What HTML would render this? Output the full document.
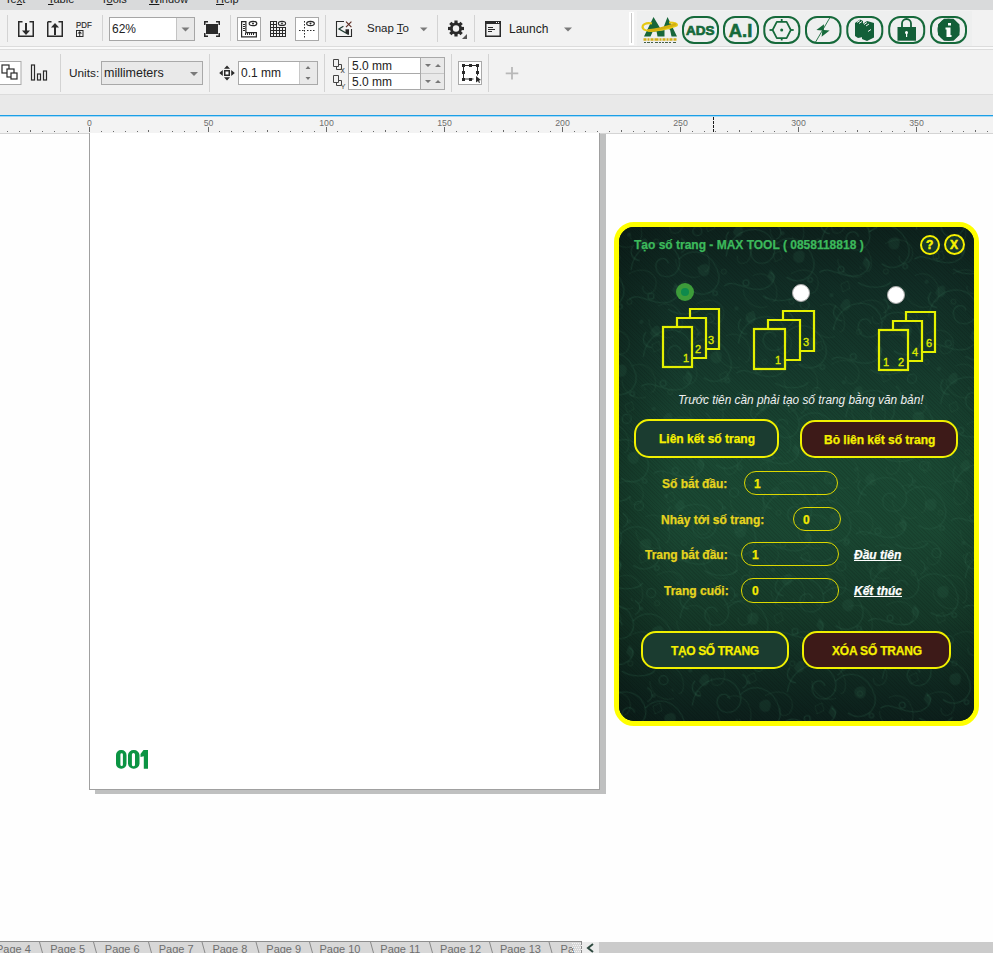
<!DOCTYPE html>
<html><head><meta charset="utf-8">
<style>
*{margin:0;padding:0;box-sizing:border-box}
html,body{width:993px;height:953px;overflow:hidden;background:#fefefe;font-family:"Liberation Sans",sans-serif;position:relative}
.a{position:absolute}
.menu{left:0;top:0;width:993px;height:10px;background:#d9dadb;overflow:hidden}
.menu span{position:absolute;top:-7px;font-size:11px;color:#1a1a1a}
.tb1{left:0;top:10px;width:993px;height:36px;background:#f2f2f2}
.ln{background:#dcdcdc}
.sep{position:absolute;width:1px;background:#d6d6d6}
.tb2{left:0;top:50px;width:993px;height:44px;background:#f2f2f2}
.band{left:0;top:95px;width:993px;height:20px;background:#e9e9e9}
.blue{left:0;top:115px;width:993px;height:1px;background:#1c9fe6;box-shadow:0 0.6px 0 #6cc0ee}
.ruler{left:0;top:117px;width:993px;height:16px;background:#f3f3f3}
.txt{font-size:12px;color:#222;white-space:nowrap}
.box{position:absolute;border:1px solid #a9a9a9;background:#fff}
</style></head><body>
<!-- menu -->
<div class="a menu">
  <span style="left:5px">Te<u>x</u>t</span>
  <span style="left:48px"><u>T</u>able</span>
  <span style="left:101px">T<u>o</u>ols</span>
  <span style="left:149px"><u>W</u>indow</span>
  <span style="left:216px"><u>H</u>elp</span>
</div>
<div class="a tb1"></div>
<div class="a ln" style="left:0;top:46px;width:993px;height:1px"></div>
<div class="a" style="left:0;top:47px;width:993px;height:2px;background:#fafafa"></div>
<div class="a ln" style="left:0;top:49px;width:993px;height:1px"></div>
<div class="a tb2"></div>
<div class="a ln" style="left:0;top:94px;width:993px;height:1px"></div>
<div class="a band"></div>
<div class="a blue"></div>
<div class="a ruler"></div>
<div class="a" style="left:0;top:133px;width:993px;height:1px;background:#d4d4d4"></div>


<!-- toolbar content -->
<svg class="a" style="left:0;top:0" width="993" height="134" viewBox="0 0 993 134">
<g fill="#d3d3d3">
<rect x="7" y="15" width="1" height="27"/><rect x="102" y="15" width="1" height="26"/><rect x="230" y="15" width="1" height="26"/>
<rect x="325" y="15" width="1" height="27"/><rect x="437" y="15" width="1" height="27"/><rect x="474" y="15" width="1" height="27"/>
<rect x="60" y="54" width="1" height="38"/><rect x="209" y="54" width="1" height="38"/><rect x="324" y="54" width="1" height="38"/>
<rect x="451" y="54" width="1" height="38"/><rect x="488" y="54" width="1" height="38"/>
</g>
<rect x="629" y="12" width="5" height="33" fill="#fff"/><rect x="631" y="13" width="1" height="30" fill="#c8c8c8"/>
<rect x="637" y="11" width="335" height="35" fill="#eeefef"/>
<g fill="none" stroke="#2a2a2a" stroke-width="1.5">
<!-- import -->
<path d="M22.5 21.75H18.75V36.25H33.25V21.75H29.5"/>
<path d="M47.75 21.75H51.5M58.5 21.75H62.25V36.25H47.75V21.75"/>
<!-- fullscreen brackets -->
<path d="M204.75 25V21.75H208M216 21.75H219.25V25M219.25 33V36.25H216M208 36.25H204.75V33"/>
</g>
<g fill="#2a2a2a">
<rect x="25" y="23" width="2" height="9"/><path d="M22 30.5h8l-4 4.5z"/>
<rect x="54" y="26" width="2" height="9"/><path d="M51 27.5h8l-4-4.5z"/>
<rect x="206" y="24" width="12" height="10"/>
</g>
<text x="76" y="28" font-family="Liberation Sans" font-size="8.4" fill="#2a2a2a" stroke="#2a2a2a" stroke-width="0.2" textLength="15.7" lengthAdjust="spacingAndGlyphs">PDF</text>
<rect x="76.5" y="30.5" width="6.5" height="6" fill="none" stroke="#2a2a2a" stroke-width="1"/>
<path d="M77.5 33.5l2.25-2.5 2.25 2.5z" fill="#2a2a2a"/><rect x="79.2" y="33" width="1" height="3.5" fill="#2a2a2a"/>
<!-- combo -->
<rect x="109.5" y="17.5" width="85" height="23" fill="#fff" stroke="#a6a6a6"/>
<rect x="176" y="18" width="18" height="22" fill="#e9e9e9"/><rect x="176" y="18" width="1" height="22" fill="#c4c4c4"/>
<path d="M181.5 27.5h8l-4 4z" fill="#7a7a7a"/>
<!-- ruler box -->
<rect x="237.5" y="17.5" width="23" height="23" fill="#fff" stroke="#a9a9a9"/>
<path d="M241.6 21.6h4.3v11h10.5v4.3h-14.8z" fill="none" stroke="#2a2a2a" stroke-width="1.2"/>
<g fill="#2a2a2a"><rect x="243" y="24" width="2" height="1"/><rect x="243" y="26" width="2" height="1"/><rect x="243" y="28" width="2" height="1"/><rect x="243" y="30" width="2" height="1"/>
<rect x="245" y="33" width="1" height="2"/><rect x="247" y="33" width="1" height="2"/><rect x="249" y="33" width="1" height="2"/><rect x="251" y="33" width="1" height="2"/><rect x="253" y="33" width="1" height="2"/></g>
<ellipse cx="253" cy="23.5" rx="3.8" ry="2.2" fill="none" stroke="#2a2a2a" stroke-width="1.2"/><circle cx="253" cy="23.5" r="1" fill="#2a2a2a"/>
<!-- grid -->
<g fill="#2a2a2a">
<rect x="270" y="21" width="1" height="16"/>
<rect x="273" y="21" width="1" height="16"/>
<rect x="276" y="21" width="1" height="16"/>
<rect x="279" y="27" width="1" height="10"/>
<rect x="282" y="27" width="1" height="10"/>
<rect x="285" y="27" width="1" height="10"/>
<rect x="270" y="21" width="7" height="1"/>
<rect x="270" y="24" width="7" height="1"/>
<rect x="270" y="27" width="16" height="1"/>
<rect x="270" y="30" width="16" height="1"/>
<rect x="270" y="33" width="16" height="1"/>
<rect x="270" y="36" width="16" height="1"/>
</g>
<ellipse cx="282" cy="23.4" rx="3.6" ry="2" fill="none" stroke="#2a2a2a" stroke-width="1.1"/><circle cx="282" cy="23.4" r="0.9" fill="#2a2a2a"/>
<!-- guidelines box -->
<rect x="295.5" y="17.5" width="23" height="23" fill="#fff" stroke="#a9a9a9"/>
<g fill="#2a2a2a"><rect x="304" y="21" width="1" height="1.5"/><rect x="304" y="24" width="1" height="1.5"/><rect x="304" y="27" width="1" height="1.5"/><rect x="304" y="30" width="1" height="1.5"/><rect x="304" y="33" width="1" height="1.5"/><rect x="304" y="36" width="1" height="1.5"/>
<rect x="299" y="30" width="1.5" height="1"/><rect x="302" y="30" width="1.5" height="1"/><rect x="307" y="30" width="1.5" height="1"/><rect x="310" y="30" width="1.5" height="1"/><rect x="313" y="30" width="1.5" height="1"/></g>
<ellipse cx="310.5" cy="23.5" rx="3.8" ry="2.2" fill="none" stroke="#2a2a2a" stroke-width="1.2"/><circle cx="310.5" cy="23.5" r="1" fill="#2a2a2a"/>
<!-- snap icon -->
<path d="M344 21.5H336.5V36.5H351.5V29" fill="none" stroke="#2a2a2a" stroke-width="1.1"/>
<path d="M346 21.6l5.4 5.6M351.4 21.6l-5.4 5.6" stroke="#5a2a20" stroke-width="1.1"/>
<path d="M343.4 26.3L339 29l9.6 5.5" fill="none" stroke="#1f3a30" stroke-width="1.3"/>
<path d="M345.5 29.2h3.5v5.5l-3.5-2z" fill="#2a2a2a"/>
<path d="M420 27.5h7.5l-3.75 3.75z" fill="#7a7a7a"/>
<!-- gear -->
<g transform="translate(456,28.5)">
<circle r="6" fill="#2a2a2a"/><circle r="3.2" fill="#f2f2f2"/>
<g fill="#2a2a2a"><rect x="-1.6" y="-8" width="3.2" height="16"/><rect x="-1.6" y="-8" width="3.2" height="16" transform="rotate(45)"/><rect x="-1.6" y="-8" width="3.2" height="16" transform="rotate(90)"/><rect x="-1.6" y="-8" width="3.2" height="16" transform="rotate(135)"/></g>
<circle r="3.2" fill="#f2f2f2"/>
</g>
<path d="M462 39h5v-5z" fill="#555"/>
<!-- launch window -->
<rect x="485.75" y="21.75" width="14.5" height="14.5" fill="none" stroke="#2a2a2a" stroke-width="1.5"/>
<rect x="485" y="21" width="16" height="3" fill="#2a2a2a"/>
<g fill="#fff"><rect x="496" y="22" width="1" height="1"/><rect x="498" y="22" width="1" height="1"/></g>
<g fill="#2a2a2a"><rect x="488" y="27" width="5" height="1"/><rect x="488" y="29" width="7" height="1"/><rect x="488" y="31" width="4" height="1"/></g>
<path d="M564 27.5h8l-4 4z" fill="#7a7a7a"/>
<!-- row 2 -->
<rect x="-1" y="61.5" width="22" height="23" fill="#fff" stroke="#a9a9a9"/>
<g fill="none" stroke="#2a2a2a" stroke-width="1.2">
<rect x="2" y="65" width="7" height="8"/><rect x="7" y="69" width="7" height="8" fill="#fff"/><rect x="11" y="73" width="6" height="6" fill="#fff"/>
<rect x="31.5" y="65" width="3" height="15"/><rect x="37.5" y="74" width="3" height="6"/><rect x="43.5" y="71" width="3" height="9"/>
</g>
<rect x="101.5" y="61.5" width="101" height="23" fill="#e9e9e9" stroke="#a9a9a9"/>
<path d="M190 72h8l-4 4z" fill="#7a7a7a"/>
<g fill="#2a2a2a">
<rect x="224" y="70" width="6" height="6"/><rect x="225.5" y="71.5" width="3" height="3" fill="#fff"/>
<path d="M224 68.8h6l-3-3.4z M224 77.2h6l-3 3.4z M222.8 70v6l-3.6-3z M231.2 70v6l3.6-3z"/>
</g>
<rect x="238.5" y="61.5" width="79" height="23" fill="#fff" stroke="#a9a9a9"/>
<rect x="299" y="62" width="18" height="22" fill="#e9e9e9"/><rect x="299" y="62" width="1" height="22" fill="#c8c8c8"/>
<path d="M305.5 69h5l-2.5-3z M305.5 77h5l-2.5 3z" fill="#777"/>
<!-- dup icons -->
<g fill="none" stroke="#444" stroke-width="1">
<path d="M333.5 59.5h5v7h-5z M336.5 66.5v3h5v-5h-3"/>
<path d="M333.5 75.5h5v7h-5z M336.5 82.5v3h5v-5h-3"/>
</g>
<text x="340.5" y="72.5" font-family="Liberation Sans" font-size="8.5" fill="#444">x</text>
<text x="340.5" y="88.5" font-family="Liberation Sans" font-size="7.5" fill="#444">Y</text>
<rect x="348.5" y="57.5" width="96" height="32" fill="#fff" stroke="#a9a9a9"/>
<rect x="349" y="73" width="95" height="1" fill="#a9a9a9"/>
<rect x="420" y="58" width="24" height="31" fill="#e9e9e9"/><rect x="420" y="58" width="1" height="31" fill="#a9a9a9"/><rect x="421" y="73" width="23" height="1" fill="#c8c8c8"/>
<path d="M425 64h6l-3 3z M435 67h6l-3-3z M425 80h6l-3 3z M435 83h6l-3-3z" fill="#777"/>
<rect x="458.5" y="61.5" width="23" height="23" fill="#fff" stroke="#a9a9a9"/>
<path d="M463.5 65.5h14v10 M463.5 65.5v13.5h10" fill="none" stroke="#2a2a2a" stroke-width="1"/>
<g fill="#2a2a2a"><rect x="462" y="64" width="3" height="3"/><rect x="469" y="64" width="3" height="3"/><rect x="476" y="64" width="3" height="3"/><rect x="462" y="71" width="3" height="3"/><rect x="476" y="71" width="3" height="3"/><rect x="462" y="78" width="3" height="3"/><rect x="469" y="78" width="3" height="3"/>
<path d="M476 76l5 4-2 .5 1 2-1 .5-1-2-2 1.5z"/></g>
<path d="M512 67v12.6M505.7 73.3h12.6" stroke="#b8b8b8" stroke-width="1.8"/>
</svg>
<div class="a txt" style="left:112px;top:22px;font-size:12px;color:#222">62%</div>
<div class="a txt" style="left:367px;top:22px;font-size:11.5px;color:#222">Snap <u>T</u>o</div>
<div class="a txt" style="left:509px;top:22px;font-size:12px;color:#222">Launch</div>
<div class="a txt" style="left:69px;top:66px;font-size:11.8px;color:#222">Units:</div>
<div class="a txt" style="left:104px;top:66px;font-size:12.5px;color:#222">millimeters</div>
<div class="a txt" style="left:241px;top:66px;font-size:12px;color:#222">0.1 mm</div>
<div class="a txt" style="left:352px;top:59px;font-size:12px;color:#222">5.0 mm</div>
<div class="a txt" style="left:352px;top:75px;font-size:12px;color:#222">5.0 mm</div>


<!-- plugin icons -->
<svg class="a" style="left:0;top:0" width="993" height="50" viewBox="0 0 993 50">
<g fill="none" stroke="#15693a" stroke-width="2">
<rect x="683" y="17" width="35" height="26" rx="11"/>
<rect x="724" y="17" width="34" height="26" rx="11"/>
<rect x="764.3" y="17" width="35" height="26" rx="11"/>
<rect x="806" y="17" width="34.5" height="26" rx="11"/>
<rect x="847.3" y="17" width="35" height="26" rx="11"/>
<rect x="889.2" y="17" width="35" height="26" rx="11"/>
<rect x="931" y="17" width="35" height="26" rx="11"/>
</g>
<g fill="#15693a" font-family="Liberation Sans" font-weight="bold">
<text x="700.3" y="34.5" font-size="13" text-anchor="middle" stroke="#15693a" stroke-width="0.7" textLength="28.5" lengthAdjust="spacingAndGlyphs">ADS</text>
<text x="740.6" y="37" font-size="19" text-anchor="middle" stroke="#15693a" stroke-width="0.6" textLength="23.5" lengthAdjust="spacingAndGlyphs">A.I</text>
</g>
<!-- gear target -->
<g fill="#15693a">
<path d="M776.8 21.8 H786.6 L790.8 30 L786.6 38.2 H776.8 L772.6 30Z" fill="none" stroke="#15693a" stroke-width="1.7" stroke-linejoin="round"/>
<rect x="780.8" y="19" width="1.8" height="3"/><rect x="780.8" y="38" width="1.8" height="2.5"/>
<rect x="769.5" y="29.1" width="3.2" height="1.8"/><rect x="790.7" y="29.1" width="3" height="1.8"/>
<circle cx="781.7" cy="30" r="1.5"/>
</g>
<!-- bolt -->
<path d="M829.8 17.8 L815.6 42" stroke="#15693a" stroke-width="0.9"/>
<path d="M824 24.3 L816.4 30 L822.3 30.6 L821.6 36.8 L829.6 30.6 L823.8 30Z" fill="#15693a"/>
<!-- books -->
<g fill="#135f38">
<path d="M855 23 L860 19.5 L863 21 L863 37 L858 38 L855 36Z"/>
<path d="M862 24.5 L867 21 L874 23 L874 37.5 L867 41 L862 39Z"/>
</g>
<g stroke="#eef0ef" stroke-width="1" fill="none"><path d="M857 22.5l3-2 M859 23.5l3-2 M864 24.5l3-2 M866 26l3-2 M868 31.5l3-2"/></g>
<!-- lock -->
<path d="M902 27 V23.5 A4.5 4.5 0 0 1 911 23.5 V27" fill="none" stroke="#135f38" stroke-width="1.8"/>
<rect x="897.5" y="27" width="18.5" height="13.7" fill="#135f38"/>
<circle cx="906.5" cy="32.5" r="1.5" fill="#fff"/><rect x="906" y="33" width="1.2" height="4" fill="#fff"/>
<!-- info -->
<path d="M944 18.8 H953.5 L959.5 24.5 V35 L953.5 40.8 H944 L938 35 V24.5Z" fill="#135f38"/>
<circle cx="948.5" cy="29.8" r="11" fill="#135f38"/>
<rect x="948" y="23" width="3" height="2.5" fill="#fff"/>
<path d="M945.5 27.5 H950.5 V35 H951.5 V37 H946.5 V29.5 H945.5Z" fill="#fff"/>
<!-- logo -->
<g fill="#17663a">
<path d="M653.5 17 L644 36.5 L650.5 36.5 L652.5 32 L659 31 L661 29.5Z"/>
<path d="M656.5 31 L664.5 30 L664.5 36.5 L657.5 36.5Z"/>
<path d="M667.5 17 L663.5 27.5 L670 29.5 L671.5 36.5 L677 36.5Z"/>
</g>
<path d="M652 23.5 C 646 22, 641 25, 643 28.5 C 645 31.5, 654 31, 662 29.5 C 668 28.5, 673 27, 676.5 25.5 C 678 24, 675 22.5, 669 22.5" fill="none" stroke="#e6c812" stroke-width="2.2"/>
<path d="M648 30.5 C 656 30, 666 27.5, 676 24" fill="none" stroke="#d4b010" stroke-width="2.5"/>
<path d="M643.5 39.5 H677" stroke="#d2ae18" stroke-width="2.5" stroke-dasharray="3 1 2 1 3 1 4 1 2 1 3 1 2 1 3 1"/>
<path d="M644 42.5 H677" stroke="#45604a" stroke-width="1" stroke-dasharray="2 1 3 1 2 2 3 1 2 1"/>
</svg>

<!-- ruler -->
<svg class="a" style="left:0;top:114px" width="993" height="20" viewBox="0 114 993 20">
<g fill="#6a6a6a"><rect x="7" y="131" width="1" height="1"/><rect x="19" y="131" width="1" height="1"/><rect x="30" y="130" width="1" height="2"/><rect x="42" y="131" width="1" height="1"/><rect x="54" y="131" width="1" height="1"/><rect x="66" y="131" width="1" height="1"/><rect x="78" y="131" width="1" height="1"/><rect x="89" y="127" width="1" height="5"/><rect x="101" y="131" width="1" height="1"/><rect x="113" y="131" width="1" height="1"/><rect x="125" y="131" width="1" height="1"/><rect x="137" y="131" width="1" height="1"/><rect x="148" y="130" width="1" height="2"/><rect x="160" y="131" width="1" height="1"/><rect x="172" y="131" width="1" height="1"/><rect x="184" y="131" width="1" height="1"/><rect x="196" y="131" width="1" height="1"/><rect x="208" y="127" width="1" height="5"/><rect x="219" y="131" width="1" height="1"/><rect x="231" y="131" width="1" height="1"/><rect x="243" y="131" width="1" height="1"/><rect x="255" y="131" width="1" height="1"/><rect x="267" y="130" width="1" height="2"/><rect x="278" y="131" width="1" height="1"/><rect x="290" y="131" width="1" height="1"/><rect x="302" y="131" width="1" height="1"/><rect x="314" y="131" width="1" height="1"/><rect x="326" y="127" width="1" height="5"/><rect x="337" y="131" width="1" height="1"/><rect x="349" y="131" width="1" height="1"/><rect x="361" y="131" width="1" height="1"/><rect x="373" y="131" width="1" height="1"/><rect x="385" y="130" width="1" height="2"/><rect x="396" y="131" width="1" height="1"/><rect x="408" y="131" width="1" height="1"/><rect x="420" y="131" width="1" height="1"/><rect x="432" y="131" width="1" height="1"/><rect x="444" y="127" width="1" height="5"/><rect x="456" y="131" width="1" height="1"/><rect x="467" y="131" width="1" height="1"/><rect x="479" y="131" width="1" height="1"/><rect x="491" y="131" width="1" height="1"/><rect x="503" y="130" width="1" height="2"/><rect x="515" y="131" width="1" height="1"/><rect x="526" y="131" width="1" height="1"/><rect x="538" y="131" width="1" height="1"/><rect x="550" y="131" width="1" height="1"/><rect x="562" y="127" width="1" height="5"/><rect x="574" y="131" width="1" height="1"/><rect x="585" y="131" width="1" height="1"/><rect x="597" y="131" width="1" height="1"/><rect x="609" y="131" width="1" height="1"/><rect x="621" y="130" width="1" height="2"/><rect x="633" y="131" width="1" height="1"/><rect x="644" y="131" width="1" height="1"/><rect x="656" y="131" width="1" height="1"/><rect x="668" y="131" width="1" height="1"/><rect x="680" y="127" width="1" height="5"/><rect x="692" y="131" width="1" height="1"/><rect x="704" y="131" width="1" height="1"/><rect x="715" y="131" width="1" height="1"/><rect x="727" y="131" width="1" height="1"/><rect x="739" y="130" width="1" height="2"/><rect x="751" y="131" width="1" height="1"/><rect x="763" y="131" width="1" height="1"/><rect x="774" y="131" width="1" height="1"/><rect x="786" y="131" width="1" height="1"/><rect x="798" y="127" width="1" height="5"/><rect x="810" y="131" width="1" height="1"/><rect x="822" y="131" width="1" height="1"/><rect x="833" y="131" width="1" height="1"/><rect x="845" y="131" width="1" height="1"/><rect x="857" y="130" width="1" height="2"/><rect x="869" y="131" width="1" height="1"/><rect x="881" y="131" width="1" height="1"/><rect x="892" y="131" width="1" height="1"/><rect x="904" y="131" width="1" height="1"/><rect x="916" y="127" width="1" height="5"/><rect x="928" y="131" width="1" height="1"/><rect x="940" y="131" width="1" height="1"/><rect x="952" y="131" width="1" height="1"/><rect x="963" y="131" width="1" height="1"/><rect x="975" y="130" width="1" height="2"/><rect x="987" y="131" width="1" height="1"/></g>
<g fill="#6e6e6e" font-family="Liberation Sans" font-size="9.4" text-anchor="middle"><text x="89.5" y="125.8" textLength="4.8" lengthAdjust="spacingAndGlyphs">0</text><text x="208.5" y="125.8" textLength="9.7" lengthAdjust="spacingAndGlyphs">50</text><text x="326.5" y="125.8" textLength="14.6" lengthAdjust="spacingAndGlyphs">100</text><text x="444.5" y="125.8" textLength="14.6" lengthAdjust="spacingAndGlyphs">150</text><text x="562.5" y="125.8" textLength="14.6" lengthAdjust="spacingAndGlyphs">200</text><text x="680.5" y="125.8" textLength="14.6" lengthAdjust="spacingAndGlyphs">250</text><text x="798.5" y="125.8" textLength="14.6" lengthAdjust="spacingAndGlyphs">300</text><text x="916.5" y="125.8" textLength="14.6" lengthAdjust="spacingAndGlyphs">350</text></g>
<g fill="#1a1a1a"><rect x="713" y="117" width="1" height="3"/><rect x="713" y="121" width="1" height="3"/><rect x="713" y="125" width="1" height="3"/><rect x="713" y="129" width="1" height="3"/></g>
</svg>
<!-- page -->
<div class="a" style="left:599px;top:134px;width:7px;height:660px;background:#bfc0c0"></div>
<div class="a" style="left:95px;top:790px;width:511px;height:4px;background:#bfc0c0"></div>
<div class="a" style="left:89px;top:133px;width:511px;height:657px;border:1px solid #a0a0a0;border-top:none;background:#fff"></div>
<svg class="a" style="left:110px;top:745px" width="45" height="30" viewBox="110 745 45 30">
<g fill="#0b9443" fill-rule="evenodd">
<path d="M121 750h0.5a5 5 0 0 1 5 5v8.7a5 5 0 0 1-5 5h-0.5a5 5 0 0 1-5-5v-8.7a5 5 0 0 1 5-5z M120.4 754.5v10.2a1.25 1.25 0 0 0 2.5 0v-10.2a1.25 1.25 0 0 0-2.5 0z"/>
<path d="M133.5 750h0.5a5.5 5.5 0 0 1 5.5 5v8.7a5.5 5.5 0 0 1-5.5 5h-0.5a5.5 5.5 0 0 1-5.5-5v-8.7a5.5 5.5 0 0 1 5.5-5z M131.9 754.5v10.2a1.5 1.5 0 0 0 3.1 0v-10.2a1.5 1.5 0 0 0-3.1 0z"/>
<path d="M143.5 750h4.5v18.7h-4.2v-12.5l-3.3 0.8v-3z"/>
</g></svg>

<!-- dialog -->
<div class="a" id="dlg" style="left:614px;top:222px;width:365px;height:504px;border:5px solid #ffff00;border-radius:20px;overflow:hidden;background:#0f2820">
<div class="a" style="left:0;top:0;width:355px;height:494px;background:linear-gradient(to bottom,#0d211c 0%,#112d25 12%,#163b2d 30%,#1a4833 48%,#1a4732 62%,#153828 80%,#0f2820 92%,#0c1f1b 100%)"></div>
<div class="a" style="left:0;top:0;width:355px;height:494px;background:linear-gradient(to right,rgba(5,15,12,0.3) 0%,rgba(5,15,12,0) 16%,rgba(5,15,12,0) 90%,rgba(5,15,12,0.1) 100%)"></div>
<div class="a" style="left:0;top:0;width:355px;height:494px;background:repeating-linear-gradient(45deg,rgba(0,0,0,0.09) 0px,rgba(0,0,0,0.09) 1px,rgba(255,255,255,0) 1px,rgba(255,255,255,0) 2.5px)"></div>
<svg class="a" style="left:0;top:0" width="355" height="494">
<defs><pattern id="fl" width="96" height="88" patternUnits="userSpaceOnUse" patternTransform="rotate(-8)">
<g fill="none" stroke="#2c654a" stroke-opacity="0.32" stroke-width="1.1">
<path d="M6 44 C 14 14, 52 14, 55 40 C 57 58, 33 62, 31 46 C 30 36, 43 34, 44 43"/>
<path d="M55 40 C 70 29, 88 37, 92 59 C 94 77, 74 84, 63 73"/>
<circle cx="77" cy="15" r="4.5"/><circle cx="22" cy="73" r="3"/><circle cx="86" cy="79" r="2.2"/>
<path d="M0 73 C 11 66, 22 84, 40 81 C 51 78, 53 70, 48 66"/>
<path d="M70 4 C 62 11, 44 7, 37 0"/>
<path d="M60 20 C 66 26, 64 32, 58 34"/>
<path d="M12 20 C 6 26, 8 34, 16 36"/>
</g>
<g fill="#2c654a" fill-opacity="0.2">
<path d="M16 21 C 21 13, 28 13, 26 22 C 24 28, 18 28, 16 21Z"/>
<path d="M73 51 C 81 45, 87 51, 82 59 C 78 63, 70 59, 73 51Z"/>
<path d="M44 70 l4-7 4 7 -4 7z"/>
<circle cx="65" cy="29" r="2"/><circle cx="9" cy="9" r="2"/>
</g>
</pattern></defs>
<defs><pattern id="fl2" width="74" height="66" patternUnits="userSpaceOnUse" patternTransform="translate(23,17) rotate(24)">
<g fill="none" stroke="#2c654a" stroke-opacity="0.22" stroke-width="1">
<path d="M0 33 C 10 18, 28 20, 30 34 C 31 44, 20 47, 18 38"/>
<path d="M37 0 C 42 12, 58 14, 66 6"/>
<path d="M40 50 C 48 40, 64 42, 70 58 C 73 66, 66 70, 60 64"/>
<path d="M50 22 l5 -6 l5 6 l-5 6z"/>
<circle cx="12" cy="58" r="2.5"/>
</g>
</pattern></defs>
<rect width="355" height="494" fill="url(#fl)"/>
<rect width="355" height="494" fill="url(#fl2)"/>
</svg>
</div>


<style>
.dl{position:absolute;white-space:nowrap;font-weight:bold;font-size:12px;line-height:14px;color:#e6d41e;-webkit-text-stroke:0.25px currentColor}
.bt{color:#f5f000}
.btn{position:absolute;border:2px solid #f0f000;border-radius:15px}
.inp{position:absolute;border:1.8px solid #dcd800;border-radius:12px}
.pg{position:absolute}
</style>
<div class="dl" style="left:634px;top:238px;color:#3cb95b">Tạo số trang - MAX TOOL ( 0858118818 )</div>
<div class="a" style="left:920px;top:235px;width:20px;height:20px;border:2px solid #f5f000;border-radius:50%;background:#173a2c"></div>
<div class="dl" style="left:926px;top:238px;font-size:12px;color:#f8f200;-webkit-text-stroke:0.5px #f8f200">?</div>
<div class="a" style="left:944px;top:234px;width:21px;height:21px;border:2px solid #f5f000;border-radius:50%;background:#173a2c"></div>
<div class="dl" style="left:950px;top:238px;font-size:12px;color:#f8f200;-webkit-text-stroke:0.5px #f8f200">X</div>
<!-- radios -->
<div class="a" style="left:676px;top:283px;width:18px;height:18px;border-radius:50%;background:#3d9c3a"></div>
<div class="a" style="left:681px;top:288px;width:8px;height:8px;border-radius:50%;background:#0e8a4c"></div>
<div class="a" style="left:792px;top:284px;width:18px;height:18px;border-radius:50%;background:#fff;border:1px solid #a8a8a8"></div>
<div class="a" style="left:887px;top:286px;width:18px;height:18px;border-radius:50%;background:#fff;border:1px solid #a8a8a8"></div>
<!-- page icons -->
<svg class="a" style="left:0;top:0" width="993" height="953" viewBox="0 0 993 953">
<g fill="none" stroke="#e4f000" stroke-width="2.2">
<rect x="663" y="327" width="29" height="40"/>
<polyline points="677,327 677,318 706,318 706,358 692,358"/>
<polyline points="690,318 690,309 719,309 719,349 706,349"/>
<rect x="754" y="329" width="31" height="40"/>
<polyline points="768,329 768,320 800,320 800,360 785,360"/>
<polyline points="783,320 783,311 814,311 814,351 800,351"/>
<rect x="879" y="330" width="29" height="40"/>
<polyline points="893,330 893,321 922,321 922,361 908,361"/>
<polyline points="906,321 906,312 935,312 935,352 922,352"/>
</g>
<g fill="#dde800" stroke="#dde800" stroke-width="0.35" font-family="Liberation Sans" font-size="11">
<text x="683" y="362">1</text><text x="695" y="353">2</text><text x="708" y="344">3</text>
<text x="775" y="364">1</text><text x="803" y="346">3</text>
<text x="883" y="366">1</text><text x="898" y="366">2</text><text x="912" y="356">4</text><text x="926" y="347">6</text>
</g>
</svg>
<div class="dl" style="left:678px;top:393px;font-weight:normal;font-style:italic;color:#f0f0f0;-webkit-text-stroke:0;font-size:11.85px">Trước tiên cần phải tạo số trang bằng văn bản!</div>
<!-- buttons -->
<div class="btn" style="left:634px;top:419px;width:145px;height:39px;background:#1b3c30"></div>
<div class="dl bt" style="left:659px;top:432px">Liên kết số trang</div>
<div class="btn" style="left:800px;top:420px;width:158px;height:38px;background:#3d1a18"></div>
<div class="dl bt" style="left:824px;top:433px">Bỏ liên kết số trang</div>
<!-- form -->
<div class="dl" style="left:662px;top:477px">Số bắt đầu:</div>
<div class="inp" style="left:744px;top:471px;width:94px;height:24px"></div>
<div class="dl" style="left:754px;top:477px;color:#f2e800">1</div>
<div class="dl" style="left:661px;top:513px">Nhảy tới số trang:</div>
<div class="inp" style="left:793px;top:507px;width:48px;height:24px"></div>
<div class="dl" style="left:803px;top:513px;color:#f2e800">0</div>
<div class="dl" style="left:645px;top:548px">Trang bắt đầu:</div>
<div class="inp" style="left:741px;top:542px;width:98px;height:24px"></div>
<div class="dl" style="left:752px;top:548px;color:#f2e800">1</div>
<div class="dl" style="left:854px;top:548px;color:#fff;font-style:italic;text-decoration:underline">Đầu tiên</div>
<div class="dl" style="left:664px;top:584px">Trang cuối:</div>
<div class="inp" style="left:741px;top:578px;width:98px;height:25px"></div>
<div class="dl" style="left:752px;top:584px;color:#f2e800">0</div>
<div class="dl" style="left:854px;top:584px;color:#fff;font-style:italic;text-decoration:underline">Kết thúc</div>
<!-- bottom buttons -->
<div class="btn" style="left:641px;top:631px;width:148px;height:38px;background:#1b3c30"></div>
<div class="dl bt" style="left:671px;top:644px;letter-spacing:-0.36px">TẠO SỐ TRANG</div>
<div class="btn" style="left:802px;top:631px;width:149px;height:38px;background:#3d1a18"></div>
<div class="dl bt" style="left:832px;top:644px;letter-spacing:-0.2px">XÓA SỐ TRANG</div>

<!-- bottom tabs -->
<div class="a" style="left:0;top:941px;width:582px;height:12px;background:#d8d8d8;border-top:1px solid #8e8e8e"></div>
<div class="a" style="left:582px;top:942px;width:17px;height:11px;background:#ececec"></div>
<div class="a" style="left:599px;top:942px;width:394px;height:11px;background:#cbcbcb"></div>
<div class="a" style="left:0;top:942px;width:582px;height:11px;overflow:hidden"><span class="a" style="left:-4px;top:1px;font-size:11px;color:#6e6e6e;white-space:nowrap">Page 4</span><span class="a" style="left:50.2px;top:1px;font-size:11px;color:#6e6e6e;white-space:nowrap">Page 5</span><span class="a" style="left:104.8px;top:1px;font-size:11px;color:#6e6e6e;white-space:nowrap">Page 6</span><span class="a" style="left:158.7px;top:1px;font-size:11px;color:#6e6e6e;white-space:nowrap">Page 7</span><span class="a" style="left:212.4px;top:1px;font-size:11px;color:#6e6e6e;white-space:nowrap">Page 8</span><span class="a" style="left:266.3px;top:1px;font-size:11px;color:#6e6e6e;white-space:nowrap">Page 9</span><span class="a" style="left:319.5px;top:1px;font-size:11px;color:#6e6e6e;white-space:nowrap">Page 10</span><span class="a" style="left:380.3px;top:1px;font-size:11px;color:#6e6e6e;white-space:nowrap">Page 11</span><span class="a" style="left:440.1px;top:1px;font-size:11px;color:#6e6e6e;white-space:nowrap">Page 12</span><span class="a" style="left:500px;top:1px;font-size:11px;color:#6e6e6e;white-space:nowrap">Page 13</span><span class="a" style="left:560.6px;top:1px;font-size:11px;color:#6e6e6e;white-space:nowrap">Pa</span></div>
<svg class="a" style="left:0;top:941px" width="993" height="12" viewBox="0 941 993 12"><g stroke="#8a8a8a" stroke-width="1"><path d="M39.5 942l3 11"/><path d="M93.5 942l3 11"/><path d="M148.5 942l3 11"/><path d="M202 942l3 11"/><path d="M256 942l3 11"/><path d="M309.5 942l3 11"/><path d="M370.5 942l3 11"/><path d="M429.5 942l3 11"/><path d="M489.5 942l3 11"/><path d="M549 942l3 11"/></g><rect x="581" y="941" width="1" height="12" fill="#8a8a8a"/><rect x="572" y="943" width="1" height="1" fill="#f4f4f4"/><rect x="574" y="943" width="1" height="1" fill="#f4f4f4"/><rect x="576" y="943" width="1" height="1" fill="#f4f4f4"/><rect x="578" y="943" width="1" height="1" fill="#f4f4f4"/><rect x="580" y="943" width="1" height="1" fill="#f4f4f4"/><rect x="573" y="945" width="1" height="1" fill="#f4f4f4"/><rect x="575" y="945" width="1" height="1" fill="#f4f4f4"/><rect x="577" y="945" width="1" height="1" fill="#f4f4f4"/><rect x="579" y="945" width="1" height="1" fill="#f4f4f4"/><rect x="581" y="945" width="1" height="1" fill="#f4f4f4"/><rect x="572" y="947" width="1" height="1" fill="#f4f4f4"/><rect x="574" y="947" width="1" height="1" fill="#f4f4f4"/><rect x="576" y="947" width="1" height="1" fill="#f4f4f4"/><rect x="578" y="947" width="1" height="1" fill="#f4f4f4"/><rect x="580" y="947" width="1" height="1" fill="#f4f4f4"/><rect x="573" y="949" width="1" height="1" fill="#f4f4f4"/><rect x="575" y="949" width="1" height="1" fill="#f4f4f4"/><rect x="577" y="949" width="1" height="1" fill="#f4f4f4"/><rect x="579" y="949" width="1" height="1" fill="#f4f4f4"/><rect x="581" y="949" width="1" height="1" fill="#f4f4f4"/><rect x="572" y="951" width="1" height="1" fill="#f4f4f4"/><rect x="574" y="951" width="1" height="1" fill="#f4f4f4"/><rect x="576" y="951" width="1" height="1" fill="#f4f4f4"/><rect x="578" y="951" width="1" height="1" fill="#f4f4f4"/><rect x="580" y="951" width="1" height="1" fill="#f4f4f4"/><path d="M593 944l-5 4 5 4" fill="none" stroke="#2f4a40" stroke-width="2"/></svg>
</body></html>
